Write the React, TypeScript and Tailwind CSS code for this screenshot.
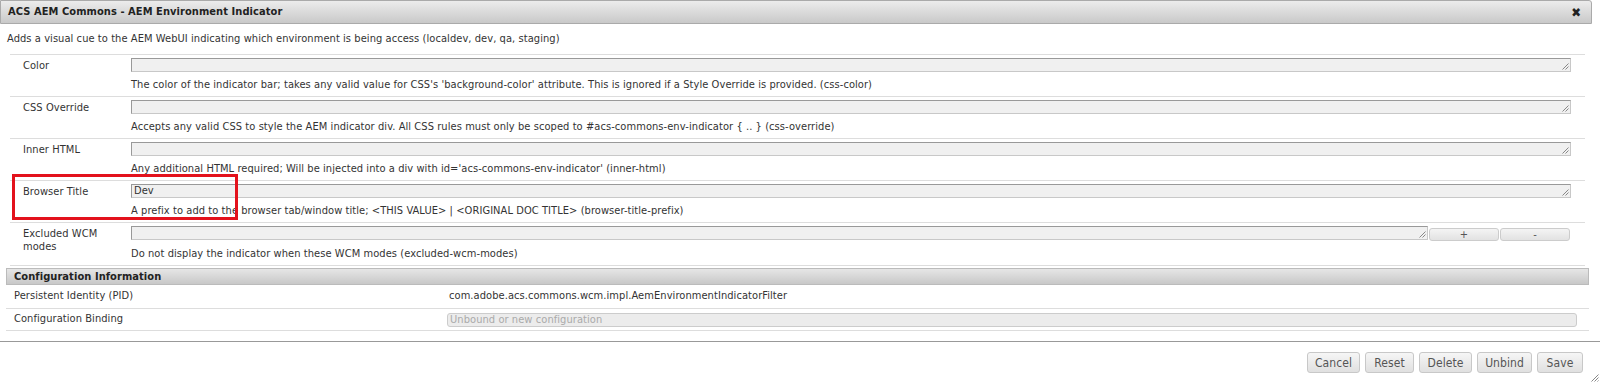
import React from "react"

const FONT = { fontFamily: '"DejaVu Sans Condensed", "DejaVu Sans", sans-serif' }

interface FieldRow {
    label: string
    help: string
    value?: string
    multi?: boolean
}

const rows: FieldRow[] = [
    {
        label: "Color",
        help: "The color of the indicator bar; takes any valid value for CSS's 'background-color' attribute. This is ignored if a Style Override is provided. (css-color)",
    },
    {
        label: "CSS Override",
        help: "Accepts any valid CSS to style the AEM indicator div. All CSS rules must only be scoped to #acs-commons-env-indicator { .. } (css-override)",
    },
    {
        label: "Inner HTML",
        help: "Any additional HTML required; Will be injected into a div with id='acs-commons-env-indicator' (inner-html)",
    },
    {
        label: "Browser Title",
        value: "Dev",
        help: "A prefix to add to the browser tab/window title; <THIS VALUE> | <ORIGINAL DOC TITLE> (browser-title-prefix)",
    },
    {
        label: "Excluded WCM modes",
        help: "Do not display the indicator when these WCM modes (excluded-wcm-modes)",
        multi: true,
    },
]

function Grip() {
    return (
        <svg className="absolute right-[1px] bottom-[1px] h-[7px] w-[7px]" viewBox="0 0 7 7">
            <path d="M6.5 0.5L0.5 6.5M6.5 3.5L3.5 6.5" stroke="#888" strokeWidth="1" />
        </svg>
    )
}

function TextArea({ value, width }: { value?: string; width: string }) {
    return (
        <div
            className={`relative h-[14px] ${width} border border-t-[#999] border-l-[#999] border-r-[#c8c8c8] border-b-[#c8c8c8] bg-[#f0f0f0] pl-[2px] text-[11px] leading-[12px] text-[#333]`}
        >
            {value}
            <Grip />
        </div>
    )
}

function SmallButton({ children }: { children: React.ReactNode }) {
    return (
        <div className="flex h-[13px] w-[70px] items-center justify-center rounded-[3px] border border-[#ccc] bg-gradient-to-b from-[#f4f4f4] to-[#e2e2e2] text-[11px] leading-none text-[#555]">
            {children}
        </div>
    )
}

function ActionButton({ children, width }: { children: React.ReactNode; width: string }) {
    return (
        <div
            className={`flex h-[21px] ${width} items-center justify-center rounded-[3px] border border-[#c8c8c8] bg-gradient-to-b from-[#f6f6f6] to-[#e0e0e0] text-[12px] text-[#555]`}
        >
            {children}
        </div>
    )
}

export default function App() {
    return (
        <div
            className="relative h-[384px] w-[1600px] overflow-hidden bg-white text-[11px] tracking-[0.07px] text-[#333]"
            style={FONT}
        >
            {/* dialog title */}
            <div className="flex h-[24px] w-[1592px] items-center justify-between rounded-tr-[3px] border border-[#aaa] bg-gradient-to-b from-[#ececec] to-[#c9c9c9] pr-[10px] pl-[7px]">
                <span className="text-[11px] font-bold text-[#222]">ACS AEM Commons - AEM Environment Indicator</span>
                <span className="text-[13px] font-bold leading-none text-[#222]">✖</span>
            </div>

            <div className="pt-[8px] pb-[8px] pl-[7px] leading-[14px]">
                Adds a visual cue to the AEM WebUI indicating which environment is being access (localdev, dev, qa, staging)
            </div>

            <div className="ml-[10px] w-[1575px] border-b border-[#ddd]">
                {rows.map((r) => (
                    <div key={r.label} className="flex border-t border-[#ddd] pt-[3px] pb-[4px]">
                        <div className="w-[121px] pt-[1px] pl-[13px] pr-[10px] leading-[13px]">{r.label}</div>
                        <div className="flex-1">
                            {r.multi ? (
                                <div className="flex items-start gap-[1px]">
                                    <TextArea width="w-[1297px]" />
                                    <div className="mt-[2px] flex gap-[1px]">
                                        <SmallButton>+</SmallButton>
                                        <SmallButton>-</SmallButton>
                                    </div>
                                </div>
                            ) : (
                                <TextArea value={r.value} width="w-[1440px]" />
                            )}
                            <div className="mt-[6px] leading-[14px]">{r.help}</div>
                        </div>
                    </div>
                ))}
            </div>

            {/* configuration information */}
            <div className="mt-[2px] ml-[6px] w-[1583px]">
                <div className="h-[17px] border border-[#bbb] bg-gradient-to-b from-[#e6e6e6] to-[#c8c8c8] pl-[7px] text-[11px] leading-[15px] font-bold text-[#222]">
                    Configuration Information
                </div>
                <div className="flex h-[24px] items-center border-b border-[#ddd] pl-[8px]">
                    <div className="w-[435px]">Persistent Identity (PID)</div>
                    <div>com.adobe.acs.commons.wcm.impl.AemEnvironmentIndicatorFilter</div>
                </div>
                <div className="flex h-[22px] items-center border-b border-[#ddd] pl-[8px]">
                    <div className="w-[433px]">Configuration Binding</div>
                    <div className="h-[14px] w-[1130px] rounded-[3px] border border-[#ccc] bg-[#ececec] pl-[2px] leading-[12px] text-[#aaa]">
                        Unbound or new configuration
                    </div>
                </div>
            </div>

            <div className="mt-[10px] border-t border-[#999]" />

            <div className="mt-[10px] flex justify-end gap-[5px] pr-[17px]">
                <ActionButton width="w-[53px]">Cancel</ActionButton>
                <ActionButton width="w-[49px]">Reset</ActionButton>
                <ActionButton width="w-[53px]">Delete</ActionButton>
                <ActionButton width="w-[55px]">Unbind</ActionButton>
                <ActionButton width="w-[46px]">Save</ActionButton>
            </div>

            <svg className="absolute right-[1px] bottom-[2px] h-[8px] w-[8px]" viewBox="0 0 8 8">
                <path d="M7.5 0.5L0.5 7.5M7.5 3.5L3.5 7.5M7.5 6.5L6.5 7.5" stroke="#888" strokeWidth="1" />
            </svg>

            {/* highlight */}
            <div className="absolute top-[174px] left-[12px] h-[46px] w-[226px] border-[3px] border-[#e3121c]" />
        </div>
    )
}
